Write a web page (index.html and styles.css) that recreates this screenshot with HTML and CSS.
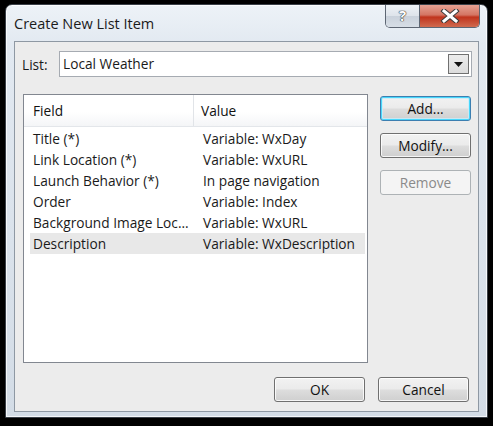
FILE: index.html
```html
<!DOCTYPE html>
<html>
<head>
<meta charset="utf-8">
<link rel="stylesheet" href="styles.css">
</head>
<body>
<div class="window">
  <div class="titlebar">
    <div class="caption">Create New List Item</div>
    <div class="caption-buttons">
      <div class="cb-help">?</div>
      <div class="cb-close">
        <svg width="20" height="14" viewBox="0 0 20 14">
          <path d="M4 2 L16 12 M16 2 L4 12" stroke="#3c3c3c" stroke-width="5" stroke-linecap="square"/>
          <path d="M4 2 L16 12 M16 2 L4 12" stroke="#ffffff" stroke-width="3" stroke-linecap="square"/>
        </svg>
      </div>
    </div>
  </div>
  <div class="client">
    <div class="list-row">
      <div class="list-label">List:</div>
      <div class="combo">
        <div class="combo-text">Local Weather</div>
        <div class="combo-btn">
          <svg width="9" height="5" viewBox="0 0 9 5"><path d="M0 0 H9 L4.5 5 Z" fill="#111"/></svg>
        </div>
      </div>
    </div>
    <div class="main">
      <div class="listview">
        <div class="lv-header">
          <div class="lv-hcell first">Field</div>
          <div class="lv-hcell">Value</div>
        </div>
        <div class="lv-rows">
          <div class="lv-row"><div class="c1">Title (*)</div><div class="c2">Variable: WxDay</div></div>
          <div class="lv-row"><div class="c1">Link Location (*)</div><div class="c2">Variable: WxURL</div></div>
          <div class="lv-row"><div class="c1">Launch Behavior (*)</div><div class="c2">In page navigation</div></div>
          <div class="lv-row"><div class="c1">Order</div><div class="c2">Variable: Index</div></div>
          <div class="lv-row"><div class="c1">Background Image Loc...</div><div class="c2">Variable: WxURL</div></div>
          <div class="lv-row selected"><div class="c1">Description</div><div class="c2">Variable: WxDescription</div></div>
        </div>
      </div>
      <div class="side-buttons">
        <div class="btn default">Add...</div>
        <div class="btn">Modify...</div>
        <div class="btn disabled">Remove</div>
      </div>
    </div>
    <div class="footer">
      <div class="btn">OK</div>
      <div class="btn">Cancel</div>
    </div>
  </div>
</div>
</body>
</html>
```

FILE: styles.css
```css
html, body {
  margin: 0;
  padding: 0;
  background: #000;
  width: 493px;
  height: 426px;
  overflow: hidden;
}
body {
  font-family: "Open Sans", "Noto Sans", sans-serif;
  font-size: 13.7px;
  color: #1a1a1a;
}
.window {
  margin: 4px 0 0 5px;
  width: 483px;
  height: 414px;
  box-sizing: border-box;
  border: 1px solid #3a4048;
  border-radius: 7px 7px 0 0;
  background: linear-gradient(to bottom, #edf2f7 0px, #e2e9f1 40px, #d3dce6 100%);
  box-shadow: inset 0 0 0 1px rgba(255,255,255,0.75);
  display: flex;
  flex-direction: column;
}
.titlebar {
  height: 36px;
  display: flex;
  justify-content: space-between;
  align-items: flex-start;
}
.caption {
  padding: 9px 0 0 8px;
  font-size: 14.5px;
  color: #1b1b1b;
}
.caption-buttons {
  display: flex;
  margin-right: 7px;
  border: 1px solid #5d6673;
  border-top: none;
  border-radius: 0 0 5px 5px;
  overflow: hidden;
  height: 22px;
}
.cb-help {
  width: 33px;
  background: linear-gradient(to bottom, #eef2f6 0%, #dde3ea 50%, #c9d1db 51%, #d7dee6 100%);
  border-right: 1px solid #5d6673;
  color: #fdfdfd;
  font-weight: bold;
  font-size: 15px;
  line-height: 20px;
  text-align: center;
  text-shadow: 0 0 1px #333, 0 0 1px #333, 0 0 1px #333;
}
.cb-close {
  width: 59px;
  background: linear-gradient(to bottom, #e6a293 0%, #d47563 45%, #c0341d 55%, #d06a4f 100%);
  display: flex;
  align-items: center;
  justify-content: center;
}
.client {
  margin: 0 8px;
  height: 371px;
  box-sizing: border-box;
  border: 1px solid #8e98a3;
  background: #ececec;
  display: flex;
  flex-direction: column;
}
.list-row {
  display: flex;
  align-items: center;
  padding: 9px 6px 0 7px;
}
.list-label {
  width: 37px;
}
.combo {
  flex: 1;
  height: 26px;
  box-sizing: border-box;
  border: 1px solid #a6abb2;
  background: #fff;
  display: flex;
  align-items: center;
  justify-content: space-between;
}
.combo-text {
  padding-left: 3px;
  padding-bottom: 1px;
}
.combo-btn {
  width: 21px;
  height: 20px;
  box-sizing: border-box;
  margin-right: 2px;
  border: 1px solid #707070;
  background: linear-gradient(to bottom, #ececec, #dcdcdc);
  display: flex;
  align-items: center;
  justify-content: center;
}
.main {
  display: flex;
  padding: 0 0 0 8px;
  margin-top: 17px;
}
.listview {
  width: 345px;
  height: 269px;
  box-sizing: border-box;
  border: 1px solid #828790;
  background: #fff;
}
.lv-header {
  display: flex;
  height: 31px;
  border-bottom: 1px solid #e3e6ea;
  background: linear-gradient(to bottom, #ffffff 0%, #ffffff 55%, #f4f5f7 100%);
}
.lv-hcell {
  display: flex;
  align-items: center;
  padding-left: 7px;
  color: #111;
}
.lv-hcell.first {
  width: 170px;
  box-sizing: border-box;
  padding-left: 9px;
  border-right: 1px solid #e1e4e8;
}
.lv-rows {
  padding: 1px 2px 0 6px;
}
.lv-row {
  display: flex;
  height: 21px;
  align-items: center;
}
.lv-row.selected {
  background: #e8e8e8;
}
.c1 {
  width: 170px;
  padding-left: 3px;
  box-sizing: border-box;
  white-space: nowrap;
}
.c2 {
  padding-left: 3px;
  white-space: nowrap;
}
.side-buttons {
  display: flex;
  flex-direction: column;
  gap: 12px;
  margin-left: 12px;
  padding-top: 2px;
}
.btn {
  width: 91px;
  height: 25px;
  box-sizing: border-box;
  border: 1px solid #707070;
  border-radius: 3px;
  background: linear-gradient(to bottom, #f2f2f2 0%, #ebebeb 48%, #dddddd 52%, #cfcfcf 100%);
  box-shadow: inset 0 0 0 1px rgba(255,255,255,0.8);
  display: flex;
  align-items: center;
  justify-content: center;
  padding-bottom: 1px;
  color: #111;
}
.btn.default {
  border-color: #3c7fb1;
  box-shadow: inset 0 0 0 1px #48d7fb, inset 0 0 0 2px rgba(200,236,250,0.8);
}
.btn.disabled {
  border-color: #adb2b5;
  background: #f4f4f4;
  box-shadow: none;
  color: #8a8a8a;
}
.footer {
  display: flex;
  justify-content: flex-end;
  gap: 13px;
  margin-top: 14px;
  padding-right: 9px;
}
```
